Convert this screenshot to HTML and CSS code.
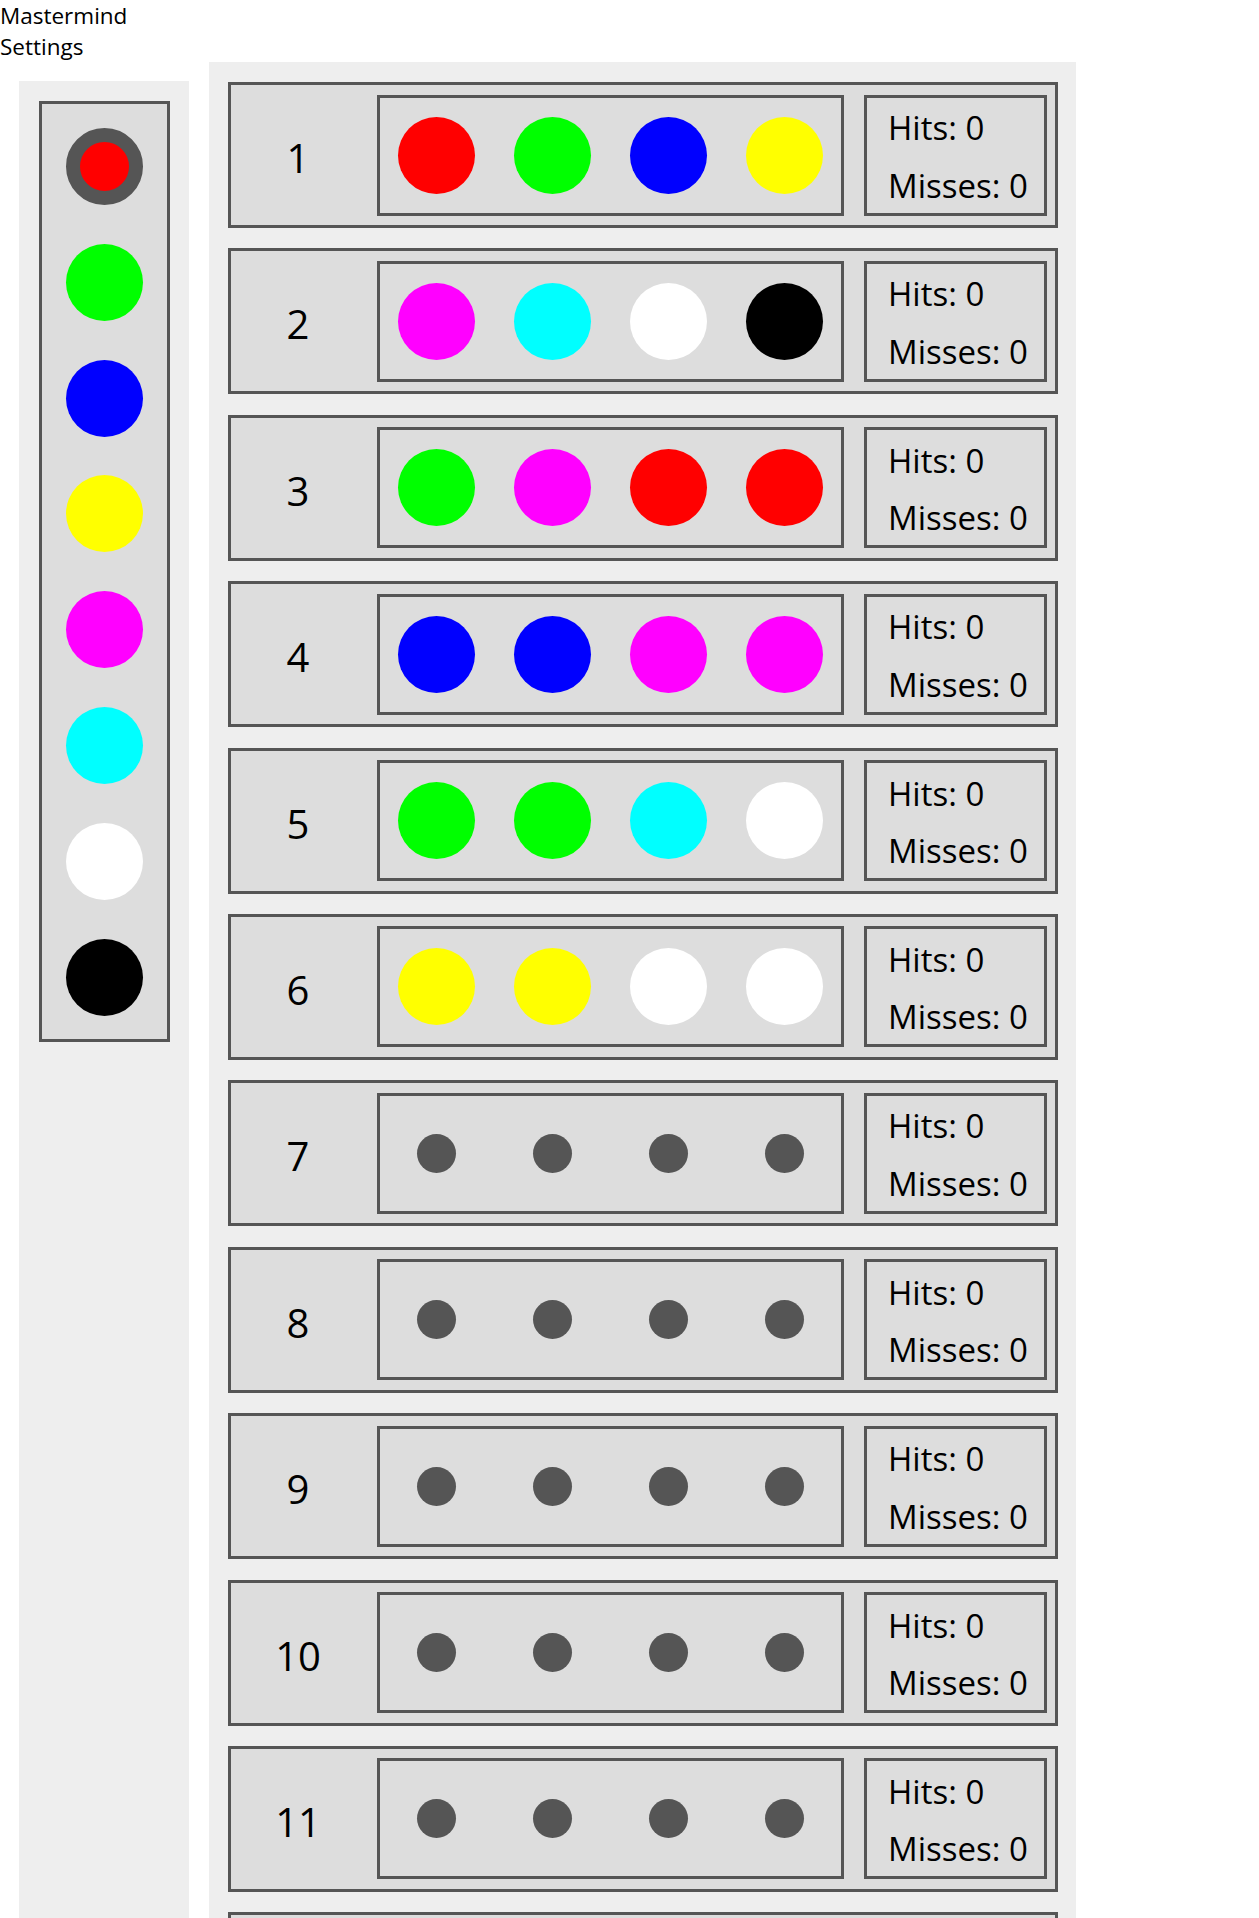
FILE: index.html
```html
<!DOCTYPE html>
<html lang="en">
<head>
<meta charset="utf-8">
<title>Mastermind</title>
<link rel="stylesheet" href="styles.css">
</head>
<body>
<header class="nav">
  <div class="nav-item">Mastermind</div>
  <div class="nav-item">Settings</div>
</header>
<main class="game">
  <aside class="palette-panel">
    <div class="palette">
      <div class="peg red selected"></div>
      <div class="peg green"></div>
      <div class="peg blue"></div>
      <div class="peg yellow"></div>
      <div class="peg magenta"></div>
      <div class="peg cyan"></div>
      <div class="peg white"></div>
      <div class="peg black"></div>
    </div>
  </aside>
  <section class="board">
    <div class="row"><div class="num">1</div><div class="pegs"><div class="peg red"></div><div class="peg green"></div><div class="peg blue"></div><div class="peg yellow"></div></div><div class="score"><div>Hits: 0</div><div>Misses: 0</div></div></div>
    <div class="row"><div class="num">2</div><div class="pegs"><div class="peg magenta"></div><div class="peg cyan"></div><div class="peg white"></div><div class="peg black"></div></div><div class="score"><div>Hits: 0</div><div>Misses: 0</div></div></div>
    <div class="row"><div class="num">3</div><div class="pegs"><div class="peg green"></div><div class="peg magenta"></div><div class="peg red"></div><div class="peg red"></div></div><div class="score"><div>Hits: 0</div><div>Misses: 0</div></div></div>
    <div class="row"><div class="num">4</div><div class="pegs"><div class="peg blue"></div><div class="peg blue"></div><div class="peg magenta"></div><div class="peg magenta"></div></div><div class="score"><div>Hits: 0</div><div>Misses: 0</div></div></div>
    <div class="row"><div class="num">5</div><div class="pegs"><div class="peg green"></div><div class="peg green"></div><div class="peg cyan"></div><div class="peg white"></div></div><div class="score"><div>Hits: 0</div><div>Misses: 0</div></div></div>
    <div class="row"><div class="num">6</div><div class="pegs"><div class="peg yellow"></div><div class="peg yellow"></div><div class="peg white"></div><div class="peg white"></div></div><div class="score"><div>Hits: 0</div><div>Misses: 0</div></div></div>
    <div class="row"><div class="num">7</div><div class="pegs"><div class="peg empty"></div><div class="peg empty"></div><div class="peg empty"></div><div class="peg empty"></div></div><div class="score"><div>Hits: 0</div><div>Misses: 0</div></div></div>
    <div class="row"><div class="num">8</div><div class="pegs"><div class="peg empty"></div><div class="peg empty"></div><div class="peg empty"></div><div class="peg empty"></div></div><div class="score"><div>Hits: 0</div><div>Misses: 0</div></div></div>
    <div class="row"><div class="num">9</div><div class="pegs"><div class="peg empty"></div><div class="peg empty"></div><div class="peg empty"></div><div class="peg empty"></div></div><div class="score"><div>Hits: 0</div><div>Misses: 0</div></div></div>
    <div class="row"><div class="num">10</div><div class="pegs"><div class="peg empty"></div><div class="peg empty"></div><div class="peg empty"></div><div class="peg empty"></div></div><div class="score"><div>Hits: 0</div><div>Misses: 0</div></div></div>
    <div class="row"><div class="num">11</div><div class="pegs"><div class="peg empty"></div><div class="peg empty"></div><div class="peg empty"></div><div class="peg empty"></div></div><div class="score"><div>Hits: 0</div><div>Misses: 0</div></div></div>
    <div class="row"><div class="num">12</div><div class="pegs"><div class="peg empty"></div><div class="peg empty"></div><div class="peg empty"></div><div class="peg empty"></div></div><div class="score"><div>Hits: 0</div><div>Misses: 0</div></div></div>
  </section>
</main>
</body>
</html>
```
FILE: styles.css
```css
html, body {
  margin: 0;
  padding: 0;
  background: #ffffff;
}

body {
  font-family: "Open Sans", "Noto Sans", sans-serif;
  color: #000000;
}

.nav {
  font-size: 22.5px;
  line-height: 31px;
}

.game {
  display: flex;
  align-items: stretch;
}

.palette-panel {
  box-sizing: border-box;
  width: 170px;
  margin: 19px 0 0 19px;
  padding: 20px 19px 0 20px;
  background: #eeeeee;
}

.palette {
  box-sizing: border-box;
  width: 131px;
  border: 3px solid #555555;
  background: #dddddd;
  padding: 24px 24px 23px;
  display: flex;
  flex-direction: column;
  gap: 38.8px;
}

.peg {
  box-sizing: border-box;
  width: 77px;
  height: 77px;
  border-radius: 50%;
  flex: 0 0 auto;
}

.peg.selected {
  border: 14px solid #555555;
}

.red { background: #ff0000; }
.green { background: #00ff00; }
.blue { background: #0000ff; }
.yellow { background: #ffff00; }
.magenta { background: #ff00ff; }
.cyan { background: #00ffff; }
.white { background: #ffffff; }
.black { background: #000000; }

.peg.empty {
  width: 39px;
  height: 39px;
  margin: 0 19px;
  background: #555555;
}

.board {
  box-sizing: border-box;
  width: 867px;
  margin-left: 20px;
  padding: 20px 18px 0 19px;
  background: #eeeeee;
}

.row {
  box-sizing: border-box;
  height: 146px;
  margin-bottom: 20.4px;
  border: 3px solid #555555;
  background: #dddddd;
  display: flex;
  align-items: center;
}

.num {
  width: 134px;
  margin-right: 12px;
  padding-top: 6px;
  text-align: center;
  font-size: 40px;
  line-height: 54px;
}

.pegs {
  box-sizing: border-box;
  width: 467px;
  height: 121px;
  border: 3px solid #555555;
  padding: 0 18px;
  display: flex;
  align-items: center;
  gap: 39px;
}

.score {
  box-sizing: border-box;
  width: 183px;
  height: 121px;
  margin-left: 20px;
  border: 3px solid #555555;
  padding: 3px 0 0 21px;
  display: flex;
  flex-direction: column;
  justify-content: center;
  font-size: 33px;
  line-height: 57.5px;
  white-space: nowrap;
}
```
